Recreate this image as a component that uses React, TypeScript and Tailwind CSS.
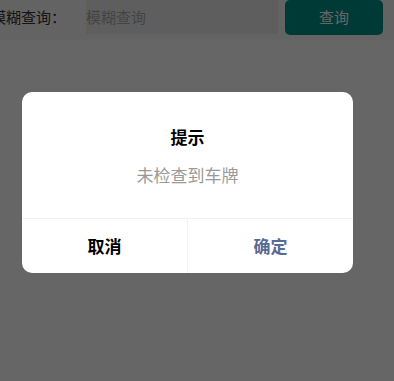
import React from "react";

export default function App() {
  const font = { fontFamily: '"Noto Sans CJK SC", "Noto Sans", sans-serif' };
  return (
    <div className="relative w-[394px] h-[381px] overflow-hidden bg-white" style={font}>
      <div className="flex items-start h-[40px] bg-[#f7f7f7] border-b border-[#fafafa]">
        <div className="ml-[-9px] w-[95px] h-[34px] flex items-center text-[15px] text-[#333] whitespace-nowrap">
          模糊查询：
        </div>
        <div className="w-[192px] h-[34px] bg-[#ececec] flex items-center text-[15px] text-[#aaa]">
          模糊查询
        </div>
        <div className="ml-[7px] w-[98px] h-[35px] rounded-[5px] bg-[#009187] flex items-center justify-center text-[15px] text-white">
          查询
        </div>
      </div>

      <div className="absolute inset-0 bg-black/60">
        <div className="ml-[22px] mt-[92px] w-[331px] bg-white rounded-[10px] overflow-hidden">
          <div className="pt-[33px] pb-[31px] flex flex-col items-center gap-[14px]">
            <div className="text-[17px] leading-[24px] font-bold text-black">提示</div>
            <div className="text-[17px] leading-[24px] text-[#999]">未检查到车牌</div>
          </div>
          <div className="flex h-[55px] border-t border-[#f2f2f2]">
            <div className="flex-1 flex items-center justify-center text-[17px] font-bold text-black border-r border-[#f2f2f2]">
              取消
            </div>
            <div className="flex-1 flex items-center justify-center text-[17px] font-bold text-[#576b95]">
              确定
            </div>
          </div>
        </div>
      </div>
    </div>
  );
}
